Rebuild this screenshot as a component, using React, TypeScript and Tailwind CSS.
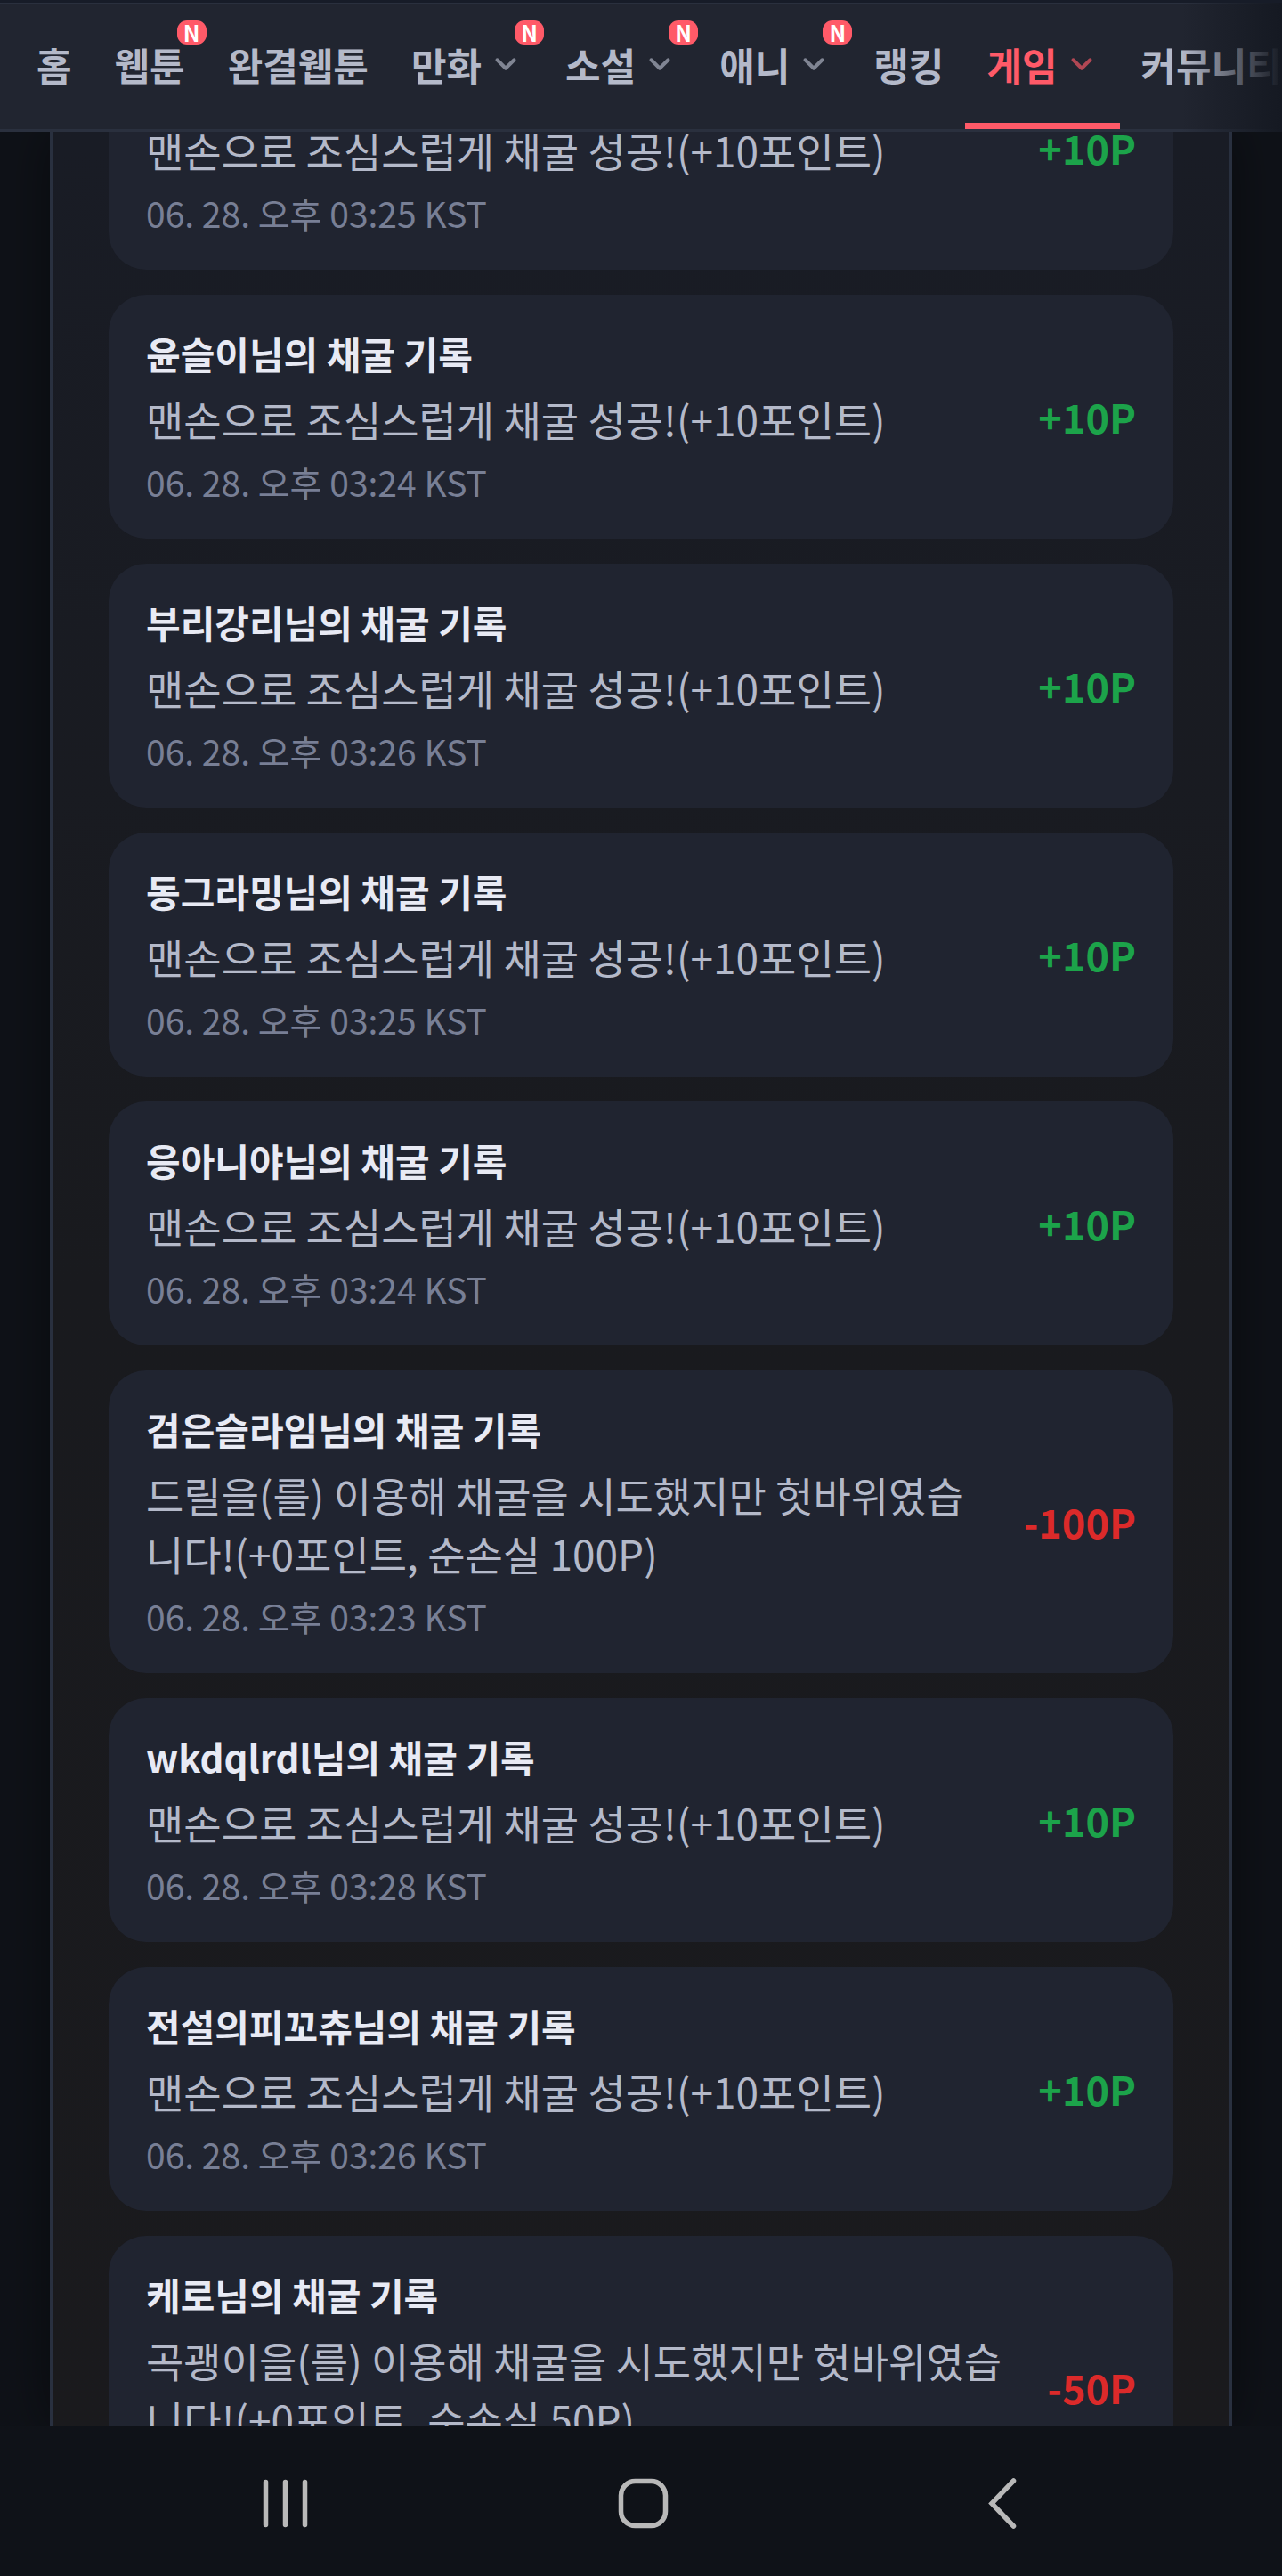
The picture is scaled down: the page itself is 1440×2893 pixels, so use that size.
import { ChevronDown } from "lucide-react";

type MenuItem = {
  label: string;
  isNew?: boolean;
  hasMenu?: boolean;
  active?: boolean;
};

type MiningRecord = {
  name?: string;
  message: string;
  time: string;
  points: number;
};

const menu: MenuItem[] = [
  { label: "홈" },
  { label: "웹툰", isNew: true },
  { label: "완결웹툰" },
  { label: "만화", isNew: true, hasMenu: true },
  { label: "소설", isNew: true, hasMenu: true },
  { label: "애니", isNew: true, hasMenu: true },
  { label: "랭킹" },
  { label: "게임", hasMenu: true, active: true },
  { label: "커뮤니티" }
];

const handMessage = "맨손으로 조심스럽게 채굴 성공!(+10포인트)";

const records: MiningRecord[] = [
  { message: handMessage, time: "06. 28. 오후 03:25 KST", points: 10 },
  { name: "윤슬이", message: handMessage, time: "06. 28. 오후 03:24 KST", points: 10 },
  { name: "부리강리", message: handMessage, time: "06. 28. 오후 03:26 KST", points: 10 },
  { name: "동그라밍", message: handMessage, time: "06. 28. 오후 03:25 KST", points: 10 },
  { name: "응아니야", message: handMessage, time: "06. 28. 오후 03:24 KST", points: 10 },
  {
    name: "검은슬라임",
    message: "드릴을(를) 이용해 채굴을 시도했지만 헛바위였습니다!(+0포인트, 순손실 100P)",
    time: "06. 28. 오후 03:23 KST",
    points: -100
  },
  { name: "wkdqlrdl", message: handMessage, time: "06. 28. 오후 03:28 KST", points: 10 },
  { name: "전설의피꼬츄", message: handMessage, time: "06. 28. 오후 03:26 KST", points: 10 },
  {
    name: "케로",
    message: "곡괭이을(를) 이용해 채굴을 시도했지만 헛바위였습니다!(+0포인트, 순손실 50P)",
    time: "06. 28. 오후 03:26 KST",
    points: -50
  }
];

function TopMenu() {
  return (
    <header className="relative z-10 shrink-0 border-t-3 border-[#171c28] bg-[#212530]">
      <nav className="flex h-[145px] overflow-hidden border-t-2 border-b-3 border-[#2a303e] pl-[17px]">
        {menu.map((item) => (
          <a
            key={item.label}
            href="#"
            className={`relative flex shrink-0 items-center gap-2 border-b-[7px] px-6 text-[43px] leading-[60px] font-bold ${
              item.active ? "border-[#ff5a68] text-[#ff5a68]" : "border-transparent text-[#b4b9c9]"
            }`}
          >
            {item.label}
            {item.hasMenu && <ChevronDown className="size-[38px] opacity-65" strokeWidth={2.5} />}
            {item.isNew && (
              <span className="absolute top-[18px] right-0 flex h-[27px] w-[33px] items-center justify-center rounded-[11px] bg-[#ff5a68] text-[25px] leading-none text-white">
                N
              </span>
            )}
          </a>
        ))}
      </nav>
      <div className="pointer-events-none absolute inset-y-0 right-0 w-[113px] bg-linear-to-r from-transparent to-[#151922]" />
    </header>
  );
}

function RecordCard({ record }: { record: MiningRecord }) {
  return (
    <li className="flex items-center justify-between gap-8 rounded-[42px] bg-[#202430] p-[42px]">
      <div>
        <h3 className="h-16 text-[42px] leading-[48px] font-bold text-[#e8eaf4]">
          {record.name && `${record.name}님의 채굴 기록`}
        </h3>
        <p className="text-[46px] leading-[66px] text-[#b4b9c9]">{record.message}</p>
        <p className="pt-4 text-[39px] leading-[44px] text-[#787f95]">{record.time}</p>
      </div>
      <strong
        className={`shrink-0 text-[45px] leading-[66px] font-bold ${
          record.points > 0 ? "text-[#1ca34a]" : "text-[#dc2a2a]"
        }`}
      >
        {record.points > 0 ? `+${record.points}P` : `${record.points}P`}
      </strong>
    </li>
  );
}

function SystemBar() {
  return (
    <footer className="flex h-[168px] shrink-0 items-center justify-between bg-[#0f1218] px-[20%] text-[#b9b9b9]">
      <button type="button" aria-label="최근 앱">
        <svg className="size-16" viewBox="0 0 64 64" fill="none" stroke="currentColor" strokeWidth="5.5" strokeLinecap="round">
          <path d="M10.5 10.5v48M32.5 10.5v48M54.5 10.5v48" />
        </svg>
      </button>
      <button type="button" aria-label="홈 화면">
        <svg className="size-16" viewBox="0 0 64 64" fill="none" stroke="currentColor" strokeWidth="5.5">
          <rect x="9.5" y="9.5" width="50" height="50" rx="16" />
        </svg>
      </button>
      <button type="button" aria-label="뒤로">
        <svg className="size-16" viewBox="0 0 64 64" fill="none" stroke="currentColor" strokeWidth="5.5" strokeLinecap="round">
          <path d="M50.5 9L26 34.5l24.5 25.5" />
        </svg>
      </button>
    </footer>
  );
}

export default function App() {
  return (
    <div className="flex h-screen flex-col overflow-hidden bg-[#0f1218] font-['Noto_Sans_CJK_KR',sans-serif]">
      <TopMenu />
      <main className="min-h-0 flex-1 overflow-hidden px-14">
        <section className="flow-root h-full border-x-3 border-[#29303f] bg-linear-to-b from-[#191c25] via-[#191a1e] via-50% to-[#1a1a1d] px-[63px] shadow-[0_0_56px_rgba(0,0,0,0.45)]">
          <ul className="-mt-[119px] flex flex-col gap-7">
            {records.map((record, index) => (
              <RecordCard key={index} record={record} />
            ))}
          </ul>
        </section>
      </main>
      <SystemBar />
    </div>
  );
}
